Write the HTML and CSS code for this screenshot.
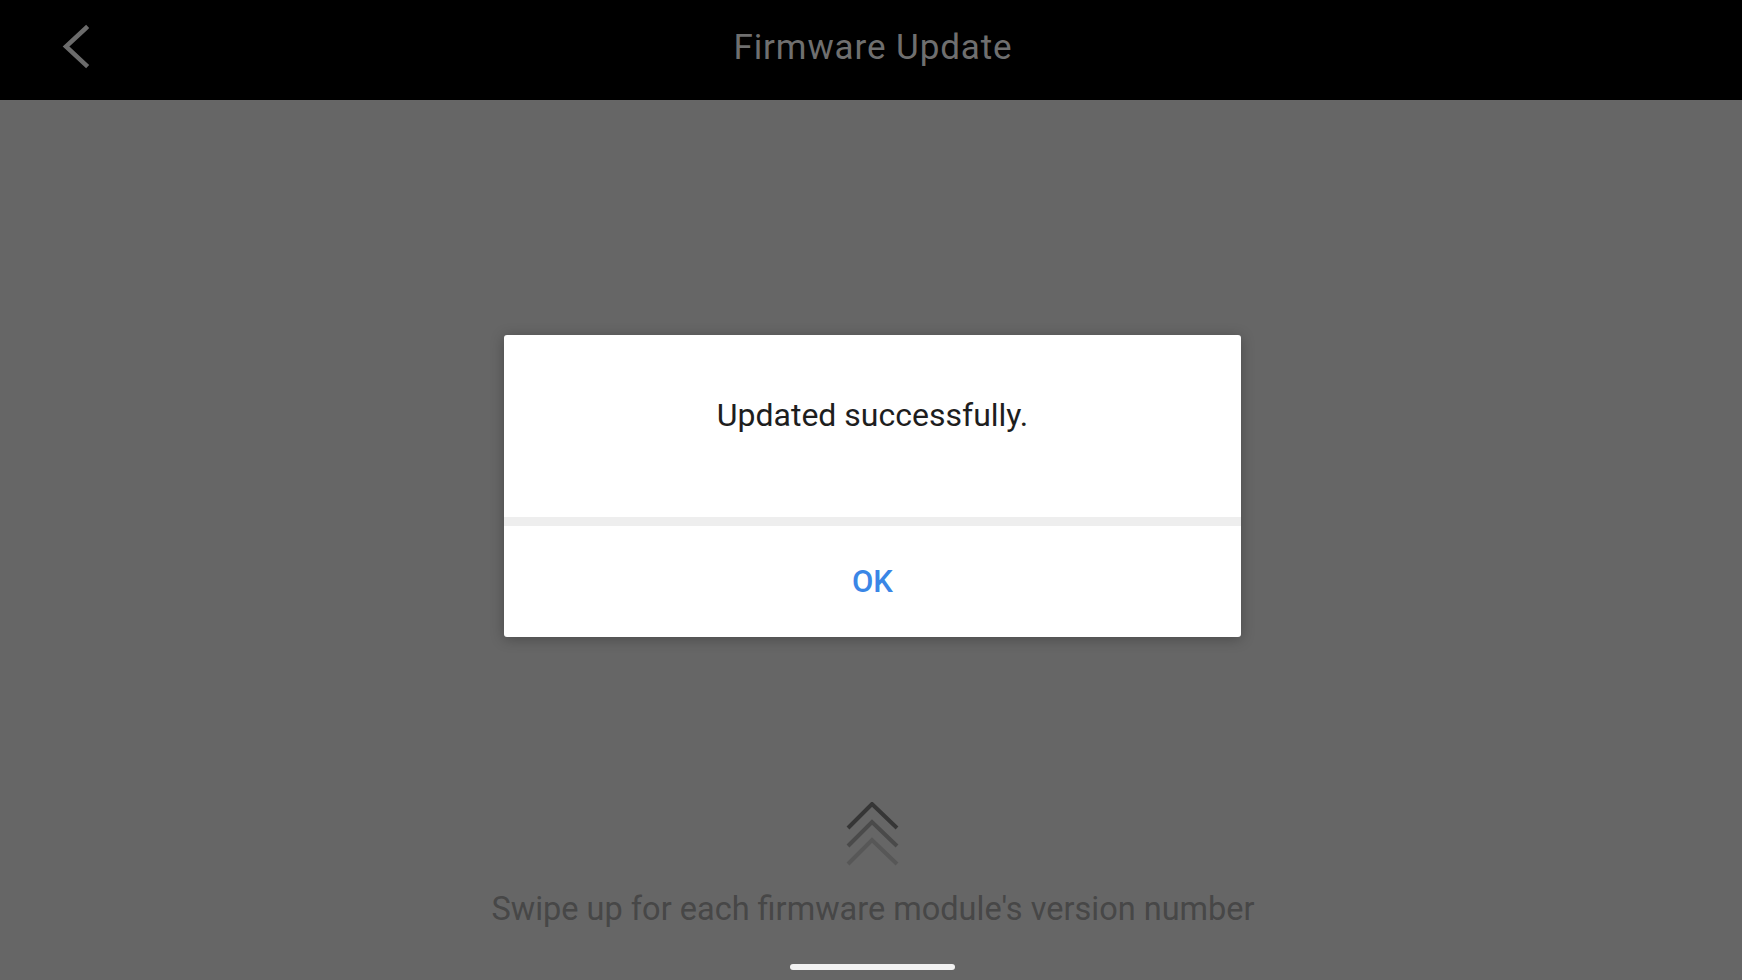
FILE: index.html
```html
<!DOCTYPE html>
<html lang="en">
<head>
<meta charset="utf-8">
<title>Firmware Update</title>
<link rel="stylesheet" href="styles.css">
</head>
<body>
<div class="app">
  <header class="topbar">
    <div class="topbar-left">
      <svg class="back-icon" width="32" height="48" viewBox="0 0 32 48" aria-hidden="true">
        <polyline points="26,5 6,23.5 26,42" fill="none" stroke="#6b6b6b" stroke-width="4.5" stroke-linecap="square" stroke-linejoin="miter"/>
      </svg>
    </div>
    <h1 class="title">Firmware Update</h1>
    <div class="topbar-right"></div>
  </header>
  <main class="content">
    <div class="bottom">
      <svg class="swipe-icon" width="54" height="66" viewBox="0 0 54 66" aria-hidden="true">
        <polyline points="2,26 26,2 51,26" fill="none" stroke="#363636" stroke-width="4"/>
        <polyline points="2,44 26,20 51,44" fill="none" stroke="#4a4a4a" stroke-width="4"/>
        <polyline points="2,62 26,38 51,62" fill="none" stroke="#575757" stroke-width="4"/>
      </svg>
      <p class="swipe-text">Swipe up for each firmware module's version number</p>
      <div class="home-bar"></div>
    </div>
    <div class="dialog" role="dialog">
      <div class="dialog-body">Updated successfully.</div>
      <div class="dialog-divider"></div>
      <div class="dialog-actions">
        <button class="dialog-ok" type="button">OK</button>
      </div>
    </div>
  </main>
</div>
</body>
</html>
```

FILE: styles.css
```css
* { box-sizing: border-box; }
html, body {
  margin: 0;
  padding: 0;
  width: 1742px;
  height: 980px;
  overflow: hidden;
  background: #666666;
  font-family: Roboto, "Noto Sans", "Liberation Sans", sans-serif;
}
.app {
  display: flex;
  flex-direction: column;
  width: 1742px;
  height: 980px;
}
.topbar {
  height: 100px;
  flex: 0 0 100px;
  background: #000;
  display: grid;
  grid-template-columns: 1fr auto 1fr;
  align-items: center;
  padding-bottom: 4px;
}
.topbar-left {
  display: flex;
  align-items: center;
  padding-left: 60px;
  padding-bottom: 2px;
}
.back-icon { display: block; }
.title {
  margin: 0;
  font-size: 35px;
  font-weight: 400;
  color: #6f6f6f;
  line-height: 38px;
  letter-spacing: 0.9px;
  padding-left: 4px;
}
.content {
  position: relative;
  flex: 1;
  background: #666666;
  display: flex;
  flex-direction: column;
  justify-content: flex-end;
}
.bottom {
  display: flex;
  flex-direction: column;
  align-items: center;
  padding-bottom: 10px;
}
.swipe-icon {
  display: block;
  margin-left: 4px;
}
.swipe-text {
  margin: 23px 0 0;
  padding-left: 4px;
  font-size: 32.5px;
  line-height: 36px;
  color: #474747;
  font-weight: 400;
}
.home-bar {
  margin-top: 37px;
  width: 165px;
  height: 6px;
  border-radius: 3px;
  background: #f2f2f2;
  margin-left: 2px;
}
.dialog {
  position: absolute;
  left: 504px;
  top: 235px;
  width: 737px;
  height: 302px;
  background: #fff;
  border-radius: 3px;
  box-shadow: 0 2px 14px rgba(0, 0, 0, 0.28);
  display: flex;
  flex-direction: column;
  overflow: hidden;
}
.dialog-body {
  height: 182px;
  padding-top: 61px;
  text-align: center;
  font-size: 32px;
  line-height: 38px;
  color: #1e1e1e;
}
.dialog-divider {
  height: 9px;
  background: #eeeeee;
}
.dialog-actions {
  flex: 1;
  display: flex;
  align-items: center;
  justify-content: center;
}
.dialog-ok {
  border: 0;
  background: transparent;
  font-family: Roboto, "Noto Sans", "Liberation Sans", sans-serif;
  font-size: 31px;
  font-weight: 500;
  color: #3a86e6;
  padding: 0;
  line-height: 36px;
}
```
